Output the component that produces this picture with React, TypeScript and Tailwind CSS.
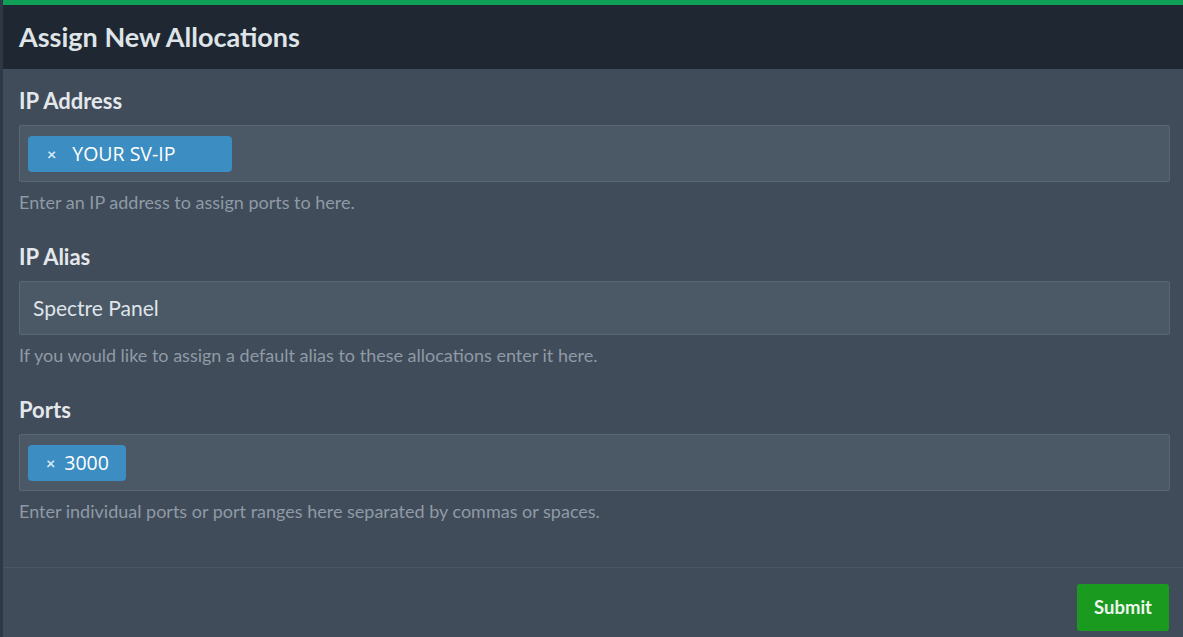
import React from 'react';

interface TagProps {
  label: string;
  wide?: boolean;
}

const Tag: React.FC<TagProps> = ({ label, wide }) => (
  <div
    className={`flex h-[36px] items-center rounded-[4px] bg-[#3b8dc2] text-white ${
      wide ? 'w-[204px] pl-[19px]' : 'pl-[18px] pr-[17px]'
    }`}
  >
    <span className="text-[16px] font-bold leading-none text-[#dce9f3]">×</span>
    <span
      className={`${wide ? 'ml-[16px]' : 'ml-[9px]'} text-[19.5px] leading-none`}
      style={{ fontFamily: '"Open Sans", "Noto Sans", sans-serif' }}
    >
      {label}
    </span>
  </div>
);

interface FieldProps {
  label: string;
  help: string;
  children: React.ReactNode;
  height: string;
}

const Field: React.FC<FieldProps> = ({ label, help, children, height }) => (
  <div>
    <div className="text-[22px] font-bold leading-[26px] text-[#e4e8ec]">{label}</div>
    <div
      className={`mt-[11px] flex items-center rounded-[2px] border border-[#5a6674] bg-[#4b5866] px-[8px] ${height}`}
    >
      {children}
    </div>
    <div className="mt-[9px] text-[18px] leading-[22px] text-[#8f9aa6]">{help}</div>
  </div>
);

export default function App() {
  return (
    <div
      className="h-[637px] w-[1183px] overflow-hidden bg-[#404c59]"
      style={{ fontFamily: 'Lato, "Open Sans", sans-serif' }}
    >
      <div className="flex h-full border-l-[3px] border-[#2e3945]">
        <div className="flex flex-1 flex-col">
          <div className="h-[5px] bg-[#0f9f56]" />
          <div className="flex h-[64px] items-center bg-[#1f2832] px-[16px]">
            <h1 className="text-[27px] font-bold text-[#dfe4e9]">Assign New Allocations</h1>
          </div>
          <div className="flex flex-col gap-[31px] pl-[16px] pr-[13px] pt-[19px]">
            <Field
              label="IP Address"
              help="Enter an IP address to assign ports to here."
              height="h-[57px]"
            >
              <Tag label="YOUR SV-IP" wide />
            </Field>
            <Field
              label="IP Alias"
              help="If you would like to assign a default alias to these allocations enter it here."
              height="h-[54px] pl-[13px]"
            >
              <span className="text-[21px] text-[#dfe4e9]">Spectre Panel</span>
            </Field>
            <Field
              label="Ports"
              help="Enter individual ports or port ranges here separated by commas or spaces."
              height="h-[57px]"
            >
              <Tag label="3000" />
            </Field>
          </div>
          <div className="mt-auto border-t border-[#4a5664] px-[14px] pb-[6px] pt-[16px]">
            <div className="flex justify-end">
              <button className="h-[47px] w-[92px] rounded-[3px] bg-[#1a9a1f] text-[18.5px] font-bold text-[#eef7ee]">
                Submit
              </button>
            </div>
          </div>
        </div>
      </div>
    </div>
  );
}
